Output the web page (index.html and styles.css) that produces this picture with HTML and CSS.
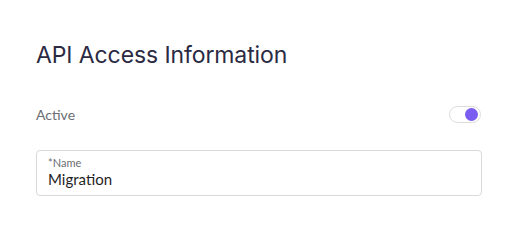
FILE: index.html
```html
<!DOCTYPE html>
<html lang="en">
  <head>
    <meta charset="UTF-8" />
    <title>API Access Information</title>
    <link rel="stylesheet" href="styles.css">
  </head>
  <body>
    <div class="panel">
      <h1 class="title">API Access Information</h1>
      <div class="row">
        <span class="rowLabel">Active</span>
        <span class="toggle"><span class="knob"></span></span>
      </div>
      <div class="field">
        <label class="fieldLabel">*Name</label>
        <div class="fieldValue">Migration</div>
      </div>
    </div>
  </body>
</html>
```

FILE: styles.css
```css
* {
  margin: 0px;
  padding: 0px;
  box-sizing: border-box;
}
body {
  background: #ffffff;
  font-family: Lato, "Noto Sans", sans-serif;
}
.panel {
  padding: 39px 36px 0 36px;
  width: 518px;
}
.title {
  font-family: Inter, Lato, sans-serif;
  font-size: 23px;
  font-weight: 400;
  color: #2b2a43;
  line-height: 32px;
  letter-spacing: -0.1px;
}
.row {
  display: flex;
  align-items: center;
  justify-content: space-between;
  margin-top: 27px;
  height: 32px;
}
.rowLabel {
  font-size: 14px;
  color: #6a6e73;
}
.toggle {
  width: 32px;
  height: 17px;
  border: 1px solid #dcdcdc;
  border-radius: 9px;
  display: flex;
  align-items: center;
  justify-content: flex-end;
  padding-right: 2px;
  margin-right: 1px;
}
.knob {
  width: 13px;
  height: 13px;
  border-radius: 50%;
  background: #7b5cf0;
}
.field {
  margin-top: 20px;
  height: 46px;
  border: 1px solid #d9d9d9;
  border-radius: 4px;
  padding: 5px 11px 0 11px;
}
.fieldLabel {
  display: block;
  font-size: 11px;
  color: #6a6e73;
  line-height: 13px;
}
.fieldValue {
  font-size: 15px;
  color: #1f1f1f;
  line-height: 20px;
}
```
